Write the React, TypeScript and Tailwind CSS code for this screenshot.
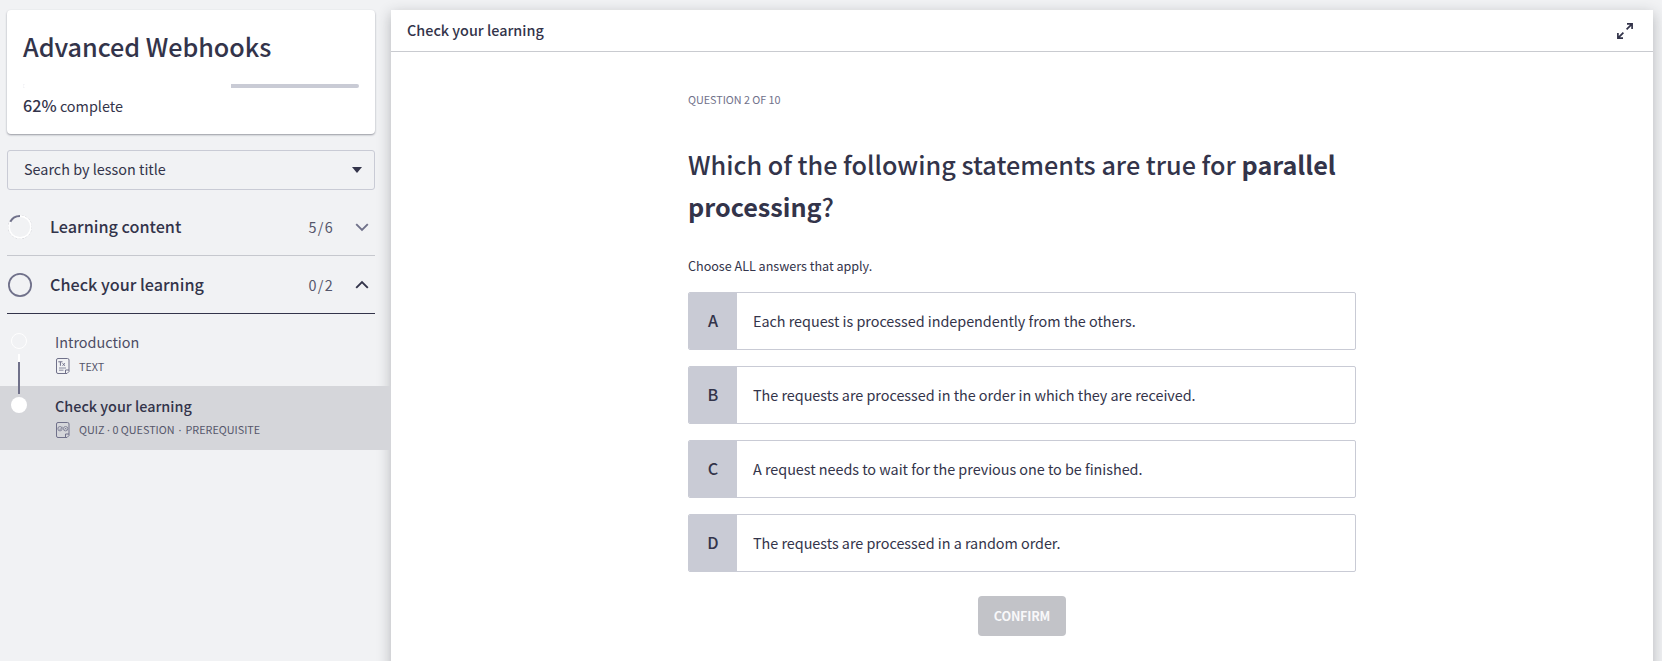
import React from "react";

const COURSE_PROGRESS = 62;

const answers = [
  { key: "A", text: "Each request is processed independently from the others." },
  { key: "B", text: "The requests are processed in the order in which they are received." },
  { key: "C", text: "A request needs to wait for the previous one to be finished." },
  { key: "D", text: "The requests are processed in a random order." },
];

function Chevron({ up = false }: { up?: boolean }) {
  return (
    <svg width="14" height="14" viewBox="0 0 14 14" fill="none" stroke={up ? "#33344a" : "#70718a"} strokeWidth="1.9">
      <path d={up ? "M1.2 9.800L7 4l5.800 5.800" : "M1.200 4.200L7 10l5.800-5.800"} />
    </svg>
  );
}

function SectionRow({
  title,
  count,
  open,
  ring,
}: {
  title: string;
  count: string;
  open?: boolean;
  ring: React.ReactNode;
}) {
  return (
    <div
      className={
        "mx-[7px] flex h-[58px] w-[368px] items-center border-b pl-px " +
        (open ? "border-[#33344a]" : "border-[#c6c8ce]")
      }
    >
      <span className="mt-px">{ring}</span>
      <h2 className="-mt-px ml-[18px] flex-1 text-[16.2px] font-medium leading-6">{title}</h2>
      <span className="mr-[21px] text-[14.4px] leading-6 tracking-[1.3px] text-[#55566b]">{count}</span>
      <span className="mr-[6px]">
        <Chevron up={open} />
      </span>
    </div>
  );
}

function DocIcon({ quiz = false }: { quiz?: boolean }) {
  return (
    <svg width="14" height="16" viewBox="0 0 14 16" fill="none" stroke="#70718a" strokeWidth="1">
      <path d="M2 .5h9.500a1.500 1.500 0 0 1 1.500 1.500v11.500l-2 2H2A1.500 1.500 0 0 1 .5 14V2A1.500 1.500 0 0 1 2 .5z" />
      <path d="M9.500 15.500v-3.500h3.500" />
      {quiz ? (
        <g strokeWidth=".9" strokeOpacity=".85">
          <circle cx="4" cy="6.700" r="2.200" />
          <circle cx="9.600" cy="6.700" r="2.200" />
          <path d="M2.900 6.600l1 1 2.700-2.500M8.800 5.900l1.600 1.600M10.400 5.900l-1.600 1.600" />
        </g>
      ) : (
        <>
          <path d="M2.300 3.800h4.200M4.400 3.800v4M6.600 5.200l2.200 2.600M8.800 5.200L6.600 7.800" />
          <path d="M3 10h7M3 12.200h4.500" strokeWidth=".8" />
        </>
      )}
    </svg>
  );
}

function Sidebar() {
  return (
    <aside className="w-[391px] shrink-0 pt-[10px]">
      <section className="mx-[7px] h-[124px] w-[368px] rounded-[4px] bg-white px-4 shadow-[0_1px_2px_rgba(40,42,60,0.45)]">
        <h1 className="pt-[18px] text-[25.2px] font-medium leading-[36px] tracking-[-0.04px]">Advanced Webhooks</h1>
        <div className="mt-5 flex h-1 w-[336px] overflow-hidden rounded-full bg-[#c9cbd5]">
          <div className="h-full bg-white" style={{ width: `${COURSE_PROGRESS}%` }} />
        </div>
        <p className="mt-[5px] text-[14.4px] leading-6">
          <span className="text-[16.2px] font-medium">62%</span> complete
        </p>
      </section>

      <div className="mx-[7px] mt-4 flex h-10 w-[368px] items-center justify-between rounded-[3px] border border-[#c9cbd5] pl-4 pr-3">
        <span className="-mt-[2px] text-[14.4px] leading-6">Search by lesson title</span>
        <svg width="10" height="6" viewBox="0 0 10 6" fill="#33344a">
          <path d="M0 0h10L5 6z" />
        </svg>
      </div>

      <div className="pt-2">
        <SectionRow
          title="Learning content"
          count="5/6"
          ring={
            <svg width="24" height="24" viewBox="0 0 24 24" fill="none">
              <circle cx="12" cy="12" r="11.600" stroke="#bfc0c8" strokeWidth=".8" strokeDasharray="2 1.500" />
              <circle cx="12" cy="12" r="10.900" stroke="#fff" strokeWidth="1.600" />
              <path d="M2.300 6.800A11 11 0 0 1 12 1" stroke="#70718a" strokeWidth="2" />
            </svg>
          }
        />
        <SectionRow
          title="Check your learning"
          count="0/2"
          open
          ring={
            <svg width="24" height="24" viewBox="0 0 24 24" fill="none">
              <circle cx="12" cy="12" r="11.100" stroke="#70718a" strokeWidth="1.800" />
            </svg>
          }
        />
      </div>

      <div className="relative pt-2">
        <div className="flex h-16 pl-[11px] pt-[11px]">
          <span className="size-4 rounded-full border border-white" />
          <div className="ml-[28px]">
            <h3 className="-mt-[3.5px] text-[14.4px] leading-6 text-[#4c4d64]">Introduction</h3>
            <div className="mt-[4.5px] flex h-4 items-center gap-[9px] pl-px text-[10.8px] text-[#55566b]">
              <DocIcon />
              <span>TEXT</span>
            </div>
          </div>
        </div>
        <div className="flex h-16 bg-[#d5d6da] pl-[11px] pt-[11px]">
          <span className="size-4 rounded-full bg-white" />
          <div className="ml-[28px]">
            <h3 className="-mt-[3.5px] text-[14.4px] font-medium leading-6">Check your learning</h3>
            <div className="mt-[4.5px] flex h-4 items-center gap-[9px] pl-px text-[10.8px] text-[#55566b]">
              <DocIcon quiz />
              <span className="whitespace-nowrap">
                QUIZ<span className="pl-[2.6px] pr-[2.4px] font-['Noto_Sans']">·</span>0 QUESTION
                <span className="px-[4px] font-['Noto_Sans']">·</span>PREREQUISITE
              </span>
            </div>
          </div>
        </div>
        <div className="absolute left-[18px] top-[40px] h-10 w-[2px] bg-[#70718a]">
          <div className="h-2 bg-white" />
        </div>
      </div>
    </aside>
  );
}

export default function App() {
  return (
    <div className="flex h-[661px] w-[1662px] overflow-hidden bg-[#f1f2f4] font-['Noto_Sans_CJK_SC',sans-serif] text-[#33344a]">
      <Sidebar />
      <main className="mt-[10px] h-[720px] w-[1262px] bg-white shadow-[0_4px_13px_rgba(40,42,50,0.3)]">
        <header className="flex h-[42px] items-center justify-between border-b border-[#c9cbd0] pl-4 pr-5">
          <h2 className="-mt-[2px] text-[14.4px] font-medium leading-6">Check your learning</h2>
          <svg width="16" height="16" viewBox="0 0 16 16" fill="none" stroke="#33344a" strokeWidth="1.7">
            <path d="M10 .9h5.100V6M15.100 .9L9.600 6.400M6 15.100H.9V10M.9 15.100l5.500-5.500" />
          </svg>
        </header>
        <div className="ml-[297px] w-[668px] pt-[35px]">
          <p className="text-[10.8px] leading-6 tracking-[-0.03px] text-[#70718a]">QUESTION 2 OF 10</p>
          <h1 className="mt-[32px] text-[25.2px] leading-[42px] font-medium">
            Which of the following statements are true for{" "}
            <b className="font-bold">
              parallel
              <br />
              processing
            </b>
            ?
          </h1>
          <p className="mt-[26.5px] text-[12.6px] leading-6 tracking-[-0.02px]">Choose ALL answers that apply.</p>
          <div className="mt-[14.5px] flex flex-col gap-4">
            {answers.map((a) => (
              <div key={a.key} className="flex h-[58px] items-stretch overflow-hidden rounded-[2px] border border-[#c9cbd5]">
                <div className="flex w-[48px] items-center justify-center bg-[#c9cbd5] pb-[2px] text-[16.2px] font-medium">
                  {a.key}
                </div>
                <p className="flex items-center pb-px pl-4 text-[14.4px] tracking-[-0.03px]">{a.text}</p>
              </div>
            ))}
          </div>
          <button className="mx-auto mt-6 flex h-10 w-[88px] items-center justify-center rounded-[4px] bg-[#c2c3c8] text-[12.6px] font-bold tracking-[-0.2px] text-[#f8f8fa]">
            CONFIRM
          </button>
        </div>
      </main>
    </div>
  );
}
